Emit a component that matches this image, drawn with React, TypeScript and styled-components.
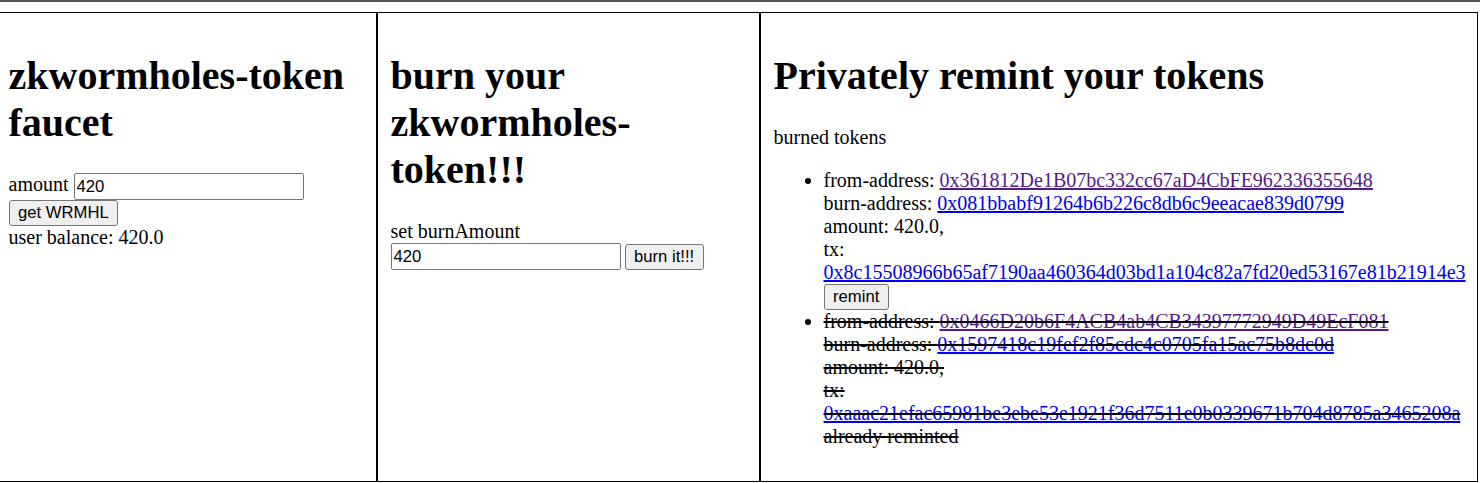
import React from 'react';
import styled, { createGlobalStyle } from 'styled-components';

const GlobalStyle = createGlobalStyle`
  html, body {
    margin: 0;
    padding: 0;
    background: #fff;
  }
  body {
    font-family: "Liberation Serif", "Times New Roman", serif;
    font-size: 20px;
    color: #000;
  }
`;

const burned = [
  {
    from: '0x361812De1B07bc332cc67aD4CbFE962336355648',
    burn: '0x081bbabf91264b6b226c8db6c9eeacae839d0799',
    amount: '420.0',
    tx: '0x8c15508966b65af7190aa460364d03bd1a104c82a7fd20ed53167e81b21914e3',
    reminted: false,
  },
  {
    from: '0x0466D20b6F4ACB4ab4CB34397772949D49EcF081',
    burn: '0x1597418c19fef2f85cdc4c0705fa15ac75b8dc0d',
    amount: '420.0',
    tx: '0xaaac21efac65981be3ebe53e1921f36d7511e0b0339671b704d8785a3465208a',
    reminted: true,
  },
];

export default function App() {
  return (
    <>
      <GlobalStyle />
      <TopRule />
      <Columns>
        <Column $width={377} $first>
          <Title>zkwormholes-token faucet</Title>
          <div>
            amount <NumberInput defaultValue="420" />
          </div>
          <Btn>get WRMHL</Btn>
          <div>user balance: 420.0</div>
        </Column>

        <Column $width={383}>
          <Title>burn your zkwormholes-token!!!</Title>
          <div>set burnAmount</div>
          <Row>
            <NumberInput defaultValue="420" />
            <Btn>burn it!!!</Btn>
          </Row>
        </Column>

        <Column $width={718}>
          <Title>Privately remint your tokens</Title>
          <Para>burned tokens</Para>
          <List>
            {burned.map((b) => (
              <Item key={b.tx} $done={b.reminted}>
                from-address: <Link href="#" $visited>{b.from}</Link>
                <br />
                burn-address: <Link href="#">{b.burn}</Link>
                <br />
                amount: {b.amount},
                <br />
                tx:
                <br />
                <Link href="#">{b.tx}</Link>
                <br />
                {b.reminted ? 'already reminted' : <Btn>remint</Btn>}
              </Item>
            ))}
          </List>
        </Column>
      </Columns>
    </>
  );
}

const TopRule = styled.div`
  height: 2px;
  background: #555;
  margin-bottom: 10px;
`;

const Columns = styled.div`
  display: flex;
  align-items: stretch;
`;

const Column = styled.div<{ $width: number; $first?: boolean }>`
  box-sizing: border-box;
  width: ${(p) => p.$width}px;
  flex: none;
  border: 1px solid #000;
  border-left: ${(p) => (p.$first ? 'none' : '1px solid #000')};
  padding: 12.5px 12.5px 13px ${(p) => (p.$first ? '8.5px' : '12.5px')};
`;

const Title = styled.h1`
  font-size: 40px;
  font-weight: bold;
  margin: 26.8px 0;
`;

const Para = styled.p`
  margin: 20px 0;
`;

const Row = styled.div`
  display: flex;
  align-items: center;
  gap: 4px;
`;

const NumberInput = styled.input`
  box-sizing: border-box;
  width: 230px;
  height: 27px;
  margin: 0;
  padding: 1px 2px;
  border: 1px solid #767676;
  border-radius: 2px;
  font-family: "Liberation Sans", Arial, sans-serif;
  font-size: 16.67px;
  color: #000;
  vertical-align: middle;
`;

const Btn = styled.button`
  box-sizing: border-box;
  height: 26px;
  margin: 0;
  padding: 0 8.5px;
  background: #efefef;
  border: 1px solid #767676;
  border-radius: 3px;
  font-family: "Liberation Sans", Arial, sans-serif;
  font-size: 16.67px;
  color: #000;
`;

const List = styled.ul`
  margin: 20px 0;
  padding-left: 50px;
`;

const Item = styled.li<{ $done?: boolean }>`
  text-decoration: ${(p) => (p.$done ? 'line-through' : 'none')};
`;

const Link = styled.a<{ $visited?: boolean }>`
  color: ${(p) => (p.$visited ? '#551a8b' : '#0000ee')};
  text-decoration: underline;
`;
